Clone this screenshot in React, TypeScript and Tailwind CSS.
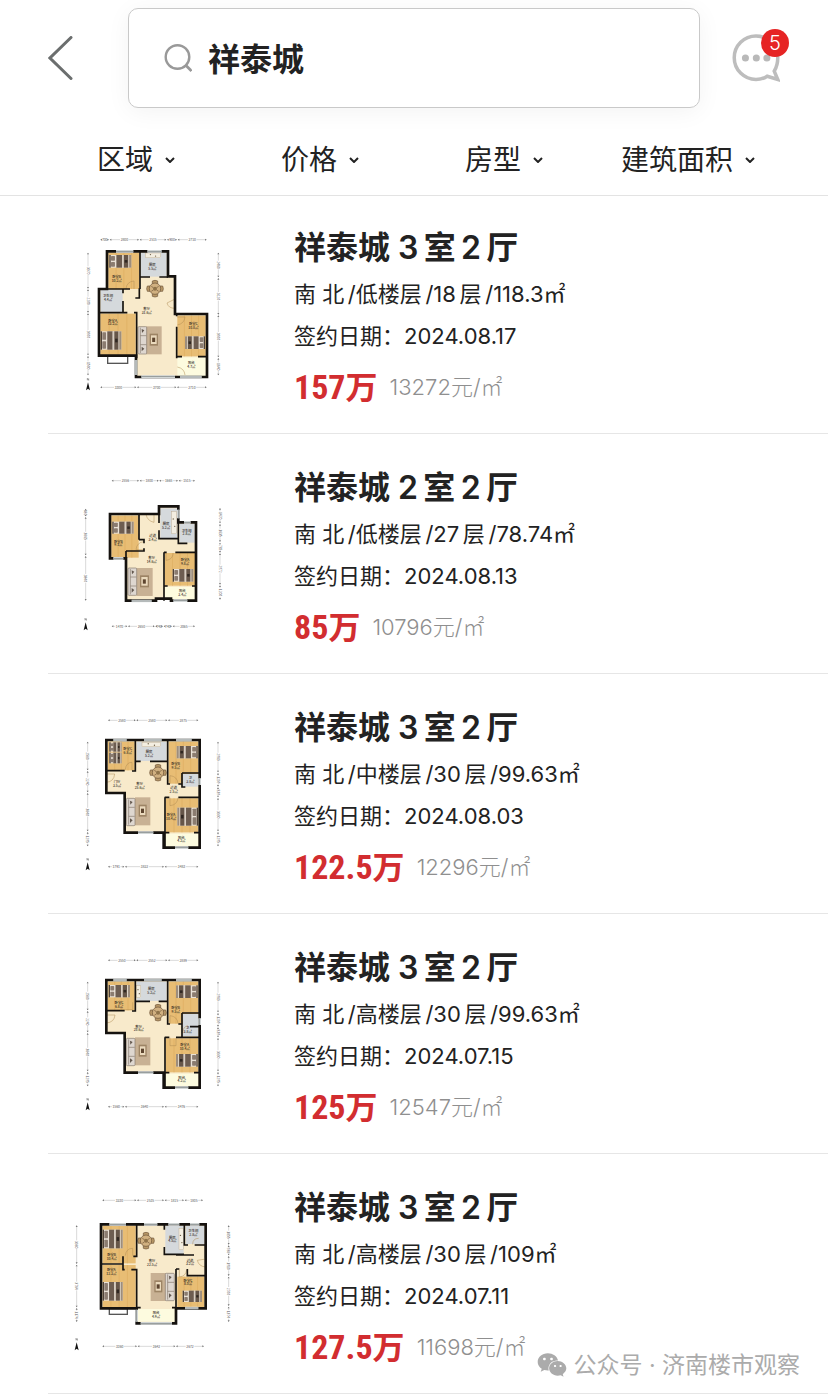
import { useState } from "react";
import { FaWeixin } from "react-icons/fa";

type Box = [x: number, y: number, w: number, h: number];
type Span = { pos: number; stops: number[]; sizes: string[] };

type Plan = {
  shell: string;
  wood: Box[];
  tile: Box[];
  balcony: Box;
  walls: string;
  windows: string;
  doors: string;
  bay?: Box;
  beds: { box: Box; head: "left" | "right" }[];
  sofa: { box: Box; rug: Box };
  dining?: [number, number];
  counter?: Box;
  labels: [x: number, y: number, name: string, area: string][];
  top: Span;
  bottom: Span;
  left: Span;
  right: Span;
};

type Listing = {
  id: number;
  rooms: number;
  level: string;
  floors: number;
  area: string;
  date: string;
  price: string;
  unit: string;
  plan: Plan;
};

// narrow space between digits and Chinese characters
const SP = "\u2006";

const filters = [
  { label: "区域", options: ["历下", "市中", "槐荫"] },
  { label: "价格", options: ["100万以下", "100-150万", "150万以上"] },
  { label: "房型", options: ["2室", "3室", "4室"] },
  { label: "建筑面积", options: ["90㎡以下", "90-120㎡", "120㎡以上"] },
];

const planA: Plan = {
  shell: "M111 79H294V154H315V267H411V456H198V392H87V192H111Z",
  wood: [
    [115, 83, 93, 109],
    [91, 266, 106, 125],
    [322, 272, 85, 122],
  ],
  tile: [
    [213, 83, 77, 72],
    [92, 195, 66, 66],
  ],
  balcony: [322, 397, 85, 56],
  walls:
    "M210 79V192M210 156H240M268 156H294M87 192H180M159 192V205M159 228V262M87 263H172M192 263H200V400M196 219H208V190M320 267V274M320 305V400M320 395H336M384 395H411",
  windows: "M138 79H190M232 79H275M214 455H315M330 456H395M198 405V450",
  doors: "M192 192V168A24 24 0 0 0 168 192M315 222L291 234Q295 250 315 250M322 426Q343 430 345 450M322 276H345Q343 296 322 300",
  bay: [113, 393, 60, 22],
  beds: [
    { box: [118, 90, 66, 38], head: "left" },
    { box: [92, 319, 62, 55], head: "left" },
    { box: [345, 334, 60, 38], head: "right" },
  ],
  sofa: { box: [204, 305, 26, 82], rug: [228, 304, 47, 84] },
  dining: [255, 191],
  counter: [226, 84, 46, 14],
  labels: [
    [140, 160, "卧室B", "10.2㎡"],
    [247, 124, "厨房", "5.5㎡"],
    [114, 216, "卫生间", "4.4㎡"],
    [128, 290, "卧室A", "13.2㎡"],
    [230, 256, "客厅", "31.6㎡"],
    [370, 300, "卧室C", "10.8㎡"],
    [364, 418, "阳台", "4.7㎡"],
  ],
  top: { pos: 44, stops: [90, 118, 208, 290, 322, 411], sizes: ["700", "2800", "2515", "900", "2710"] },
  bottom: { pos: 487, stops: [90, 200, 320, 411], sizes: ["3300", "3700", "2710"] },
  left: { pos: 54, stops: [82, 192, 264, 392, 452], sizes: ["3370", "2200", "3900", "1500"] },
  right: { pos: 445, stops: [82, 158, 270, 398, 452], sizes: ["2460", "3220", "3900", "1640"] },
};

const planB: Plan = {
  shell: "M120 147H267V124H325V172H378V407H303V401H258V407H168V280H120Z",
  wood: [
    [124, 152, 82, 126],
    [285, 264, 90, 98],
  ],
  tile: [
    [271, 130, 50, 90],
    [329, 177, 45, 56],
  ],
  balcony: [285, 366, 90, 38],
  walls:
    "M207 147V224M168 258H222V250M168 258V280M267 147V174M267 196V221H325M325 172V235H352M222 235V224H207M282 262V407M282 262H290M316 262H378M282 363H293M366 363H378",
  windows: "M130 280H160M185 408H245M310 407H352M342 172H362M325 134V160",
  doors: "M252 147V172Q232 168 228 148M222 230Q200 232 198 254H222M288 264V286Q308 284 310 264M206 222V206",
  beds: [
    { box: [127, 170, 64, 36], head: "left" },
    { box: [308, 312, 62, 38], head: "left" },
  ],
  sofa: { box: [174, 309, 26, 82], rug: [199, 309, 49, 84] },
  counter: [305, 140, 14, 66],
  labels: [
    [145, 233, "卧室B", "9.1㎡"],
    [248, 216, "过道", "3.4㎡"],
    [288, 180, "厨房", "5.2㎡"],
    [350, 200, "卫生间", "2.8㎡"],
    [245, 282, "客厅", "14.6㎡"],
    [345, 288, "卧室A", "9.8㎡"],
    [337, 382, "阳台", "3.4㎡"],
  ],
  top: { pos: 47, stops: [124, 208, 267, 325, 376], sizes: ["2556", "1800", "1665", "1515"] },
  bottom: { pos: 484, stops: [124, 173, 255, 280, 307, 376], sizes: ["1470", "2650", "740", "740", "2065"] },
  left: { pos: 47, stops: [130, 155, 272, 408], sizes: ["680", "3865", "3840"] },
  right: { pos: 450, stops: [128, 176, 232, 264, 360, 405], sizes: ["1470", "1635", "785", "2972", "1200"] },
};

const planC: Plan = {
  shell: "M109 105H389V428H281V383H164V264H109Z",
  wood: [
    [114, 110, 80, 86],
    [296, 110, 88, 126],
    [288, 280, 96, 102],
  ],
  tile: [
    [200, 110, 90, 58],
    [338, 207, 46, 38],
  ],
  balcony: [286, 386, 98, 39],
  walls:
    "M196 105V198H186M109 197H164M196 169H212M240 169H293M293 105V237H300M325 237H336M336 204V246H346M336 204H389M284 277H298M325 277H389M285 277V428M285 383H298M372 383H389",
  windows: "M130 105H170M222 105H275M318 105H365M204 383H250M315 428H355M389 220V240",
  doors: "M109 207H134Q132 230 109 232M166 194Q168 172 186 172V196M300 236V212Q322 214 324 236M300 278V302Q322 300 324 278",
  beds: [
    { box: [118, 112, 37, 28], head: "left" },
    { box: [118, 143, 37, 32], head: "left" },
    { box: [320, 123, 63, 37], head: "right" },
    { box: [322, 308, 62, 54], head: "right" },
  ],
  sofa: { box: [169, 280, 26, 82], rug: [195, 277, 46, 84] },
  dining: [264, 203],
  counter: [216, 112, 56, 13],
  labels: [
    [173, 136, "卧室C", "6.8㎡"],
    [237, 144, "厨房", "5.2㎡"],
    [317, 180, "卧室B", "9.5㎡"],
    [141, 235, "门厅", "3.5㎡"],
    [209, 241, "客厅", "25.6㎡"],
    [311, 252, "过道", "2.5㎡"],
    [361, 222, "卫", "3.8㎡"],
    [303, 333, "卧室A", "10.4㎡"],
    [334, 401, "阳台", "4.2㎡"],
  ],
  top: { pos: 46, stops: [113, 198, 293, 386], sizes: ["2580", "2580", "2875"] },
  bottom: { pos: 485, stops: [113, 164, 283, 386], sizes: ["1791", "3822", "3483"] },
  left: { pos: 53, stops: [109, 197, 263, 380, 425], sizes: ["2580", "2240", "3840", "1295"] },
  right: { pos: 444, stops: [109, 203, 246, 278, 380, 425], sizes: ["2983", "1239", "839", "3330", "1295"] },
};

const planD: Plan = {
  ...planC,
  tile: [
    [200, 110, 90, 58],
    [338, 207, 46, 66],
  ],
  walls:
    "M196 105V198H186M109 197H164M196 169H240M266 169H293M293 105V237H300M325 237H336M336 204V277M336 204H389M360 245H389M284 277H298M318 277H389M285 277V428M285 383H298M372 383H389",
  doors: "M109 210H135Q133 232 109 234M166 194H188V172M300 236V212Q322 214 324 236M300 278V302H318V278M338 262Q340 244 354 242",
  beds: [
    { box: [116, 120, 64, 37], head: "left" },
    { box: [318, 121, 65, 38], head: "right" },
    { box: [318, 327, 65, 38], head: "right" },
  ],
  counter: [200, 122, 12, 36],
  labels: [
    [147, 177, "卧室C", "6.8㎡"],
    [244, 136, "厨房", "5.2㎡"],
    [317, 192, "卧室B", "9.5㎡"],
    [206, 248, "客厅", "25.6㎡"],
    [353, 253, "卫", "3.8㎡"],
    [344, 303, "卧室A", "10.4㎡"],
    [335, 401, "阳台", "4.2㎡"],
  ],
  top: { pos: 46, stops: [113, 198, 293, 386], sizes: ["2550", "2552", "2889"] },
  bottom: { pos: 485, stops: [113, 164, 283, 386], sizes: ["1560", "3640", "3476"] },
};

const planE: Plan = {
  shell: "M93 118H407V370H318V415H200V370H93Z",
  wood: [
    [98, 123, 99, 112],
    [98, 240, 99, 126],
    [322, 275, 81, 91],
  ],
  tile: [
    [286, 123, 55, 84],
    [347, 123, 56, 54],
  ],
  balcony: [204, 372, 110, 38],
  walls:
    "M200 118V214H190M93 237H159M159 214V254H164M184 254H200V370M283 118V134M283 186V208H342M343 118V180H354M374 180H407M318 210H372M407 180V218M318 252V370M318 252H328M352 252V272H407M200 368H212M306 368H318",
  windows: "M118 118H168M222 118H262M295 118H328M360 118H388M345 369H385M212 415H306M200 374V410",
  doors: "M166 212Q168 190 188 190V212M407 222L382 226Q386 244 407 246M328 254V276Q348 274 350 254M368 178Q368 160 386 160",
  bay: [118, 371, 54, 17],
  beds: [
    { box: [98, 134, 60, 56], head: "left" },
    { box: [98, 291, 60, 56], head: "left" },
    { box: [338, 317, 58, 34], head: "left" },
  ],
  sofa: { box: [286, 265, 27, 82], rug: [242, 264, 46, 84] },
  dining: [228, 167],
  counter: [327, 130, 13, 64],
  labels: [
    [125, 213, "卧室B", "10.4㎡"],
    [124, 258, "卧室A", "12.3㎡"],
    [246, 231, "客厅", "22.5㎡"],
    [307, 161, "厨房", "4.5㎡"],
    [370, 142, "卫生间", "2.8㎡"],
    [360, 230, "过道", "3.2㎡"],
    [354, 290, "卧室C", "8.5㎡"],
    [258, 388, "阳台", "4.9㎡"],
  ],
  top: { pos: 46, stops: [96, 200, 283, 343, 400], sizes: ["3230", "2535", "1815", "1805"] },
  bottom: { pos: 484, stops: [96, 202, 317, 403], sizes: ["3360", "3642", "2672"] },
  left: { pos: 20, stops: [120, 238, 368, 412], sizes: ["3380", "3764", "1174"] },
  right: { pos: 476, stops: [120, 180, 212, 274, 364, 412], sizes: ["1855", "988", "1910", "2700", "1374"] },
};

const listings: Listing[] = [
  {
    id: 1,
    rooms: 3,
    level: "低",
    floors: 18,
    area: "118.3",
    date: "2024.08.17",
    price: "157",
    unit: "13272",
    plan: planA,
  },
  {
    id: 2,
    rooms: 2,
    level: "低",
    floors: 27,
    area: "78.74",
    date: "2024.08.13",
    price: "85",
    unit: "10796",
    plan: planB,
  },
  {
    id: 3,
    rooms: 3,
    level: "中",
    floors: 30,
    area: "99.63",
    date: "2024.08.03",
    price: "122.5",
    unit: "12296",
    plan: planC,
  },
  {
    id: 4,
    rooms: 3,
    level: "高",
    floors: 30,
    area: "99.63",
    date: "2024.07.15",
    price: "125",
    unit: "12547",
    plan: planD,
  },
  {
    id: 5,
    rooms: 3,
    level: "高",
    floors: 30,
    area: "109",
    date: "2024.07.11",
    price: "127.5",
    unit: "11698",
    plan: planE,
  },
];

function Dimension({ span, vertical }: { span: Span; vertical?: boolean }) {
  // vertical rulers are the horizontal one turned by 90 degrees
  return (
    <g transform={vertical ? `translate(${span.pos} 0) rotate(90)` : `translate(0 ${span.pos})`}>
      {span.sizes.map((size, i) => {
        const a = span.stops[i];
        const b = span.stops[i + 1];
        const mid = (a + b) / 2;
        const gap = Math.min(13, (b - a) / 3);
        return (
          <g key={i}>
            <path
              d={`M${a + 2} 0H${mid - gap}M${mid + gap} 0H${b - 2}`}
              stroke="#b5b5b5"
              strokeWidth="1.5"
            />
            <path
              d={`M${a + 1} 0l5 -3v6zM${b - 1} 0l-5 -3v6z`}
              fill="#777"
            />
            <text x={mid} y="4" fontSize="10" textAnchor="middle" fill="#555">
              {size}
            </text>
          </g>
        );
      })}
    </g>
  );
}

function Bed({ box, head }: { box: Box; head: "left" | "right" }) {
  const [x, y, w, h] = box;
  return (
    <g transform={head === "right" ? `translate(${x + w} ${y}) scale(-1 1)` : `translate(${x} ${y})`}>
      <rect width={w} height={h} fill="#e9e1d6" />
      <rect width="4" height={h} fill="#4f4238" />
      <rect x="5" y="3" width={w * 0.18} height={h / 2 - 5} rx="2" fill="#8b7c70" />
      <rect x="5" y={h / 2 + 2} width={w * 0.18} height={h / 2 - 5} rx="2" fill="#8b7c70" />
      <rect x={w * 0.32} width={w * 0.26} height={h} fill="#6d5d51" />
      <rect x={w * 0.58} width={w * 0.08} height={h} fill="#d8cec2" />
      <rect x={w * 0.66} width={w * 0.2} height={h} fill="#665649" />
      <rect x={w * 0.7} y={h * 0.4} width={w * 0.12} height={h * 0.2} fill="#2f2722" />
      <rect x={w * 0.9} width={w * 0.1} height={h} fill="#9d8d7c" />
    </g>
  );
}

function Dining({ x, y }: { x: number; y: number }) {
  return (
    <g transform={`translate(${x} ${y})`} stroke="#6e5539" strokeWidth="2">
      {[0, 90, 180, 270].map((a) => (
        <path
          key={a}
          d="M-8 -15V-23Q0 -27 8 -23V-15Z"
          fill="#b79766"
          transform={`rotate(${a})`}
        />
      ))}
      <circle r="17" fill="#d0b080" />
      <circle r="6" fill="#8f7349" stroke="none" />
      <path d="M-11 -7l6 4M11 -7l-6 4M-11 8l6 -4M11 8l-6 -4" />
    </g>
  );
}

function FloorPlan({ plan }: { plan: Plan }) {
  const { sofa, bay, counter } = plan;
  const [sx, sy, sw, sh] = sofa.box;
  const [rx, ry, rw, rh] = sofa.rug;
  return (
    <svg
      viewBox="0 9 510 549"
      className="h-[183px] w-[170px] shrink-0 font-['Noto_Sans_CJK_SC',sans-serif]"
      role="img"
      aria-label="户型图"
    >
      <Dimension span={plan.top} />
      <Dimension span={plan.bottom} />
      <Dimension span={plan.left} vertical />
      <Dimension span={plan.right} vertical />

      <path d={plan.shell} fill="#f8eacb" />
      {plan.wood.map(([x, y, w, h], i) => (
        <g key={i}>
          <rect x={x} y={y} width={w} height={h} fill="#e8bd74" />
          <path
            d={`M${x + w * 0.25} ${y}v${h}M${x + w * 0.5} ${y}v${h}M${x + w * 0.75} ${y}v${h}`}
            stroke="#deae60"
            strokeWidth="2"
          />
        </g>
      ))}
      {plan.tile.map(([x, y, w, h], i) => (
        <rect key={i} x={x} y={y} width={w} height={h} fill="#d5d9dc" />
      ))}
      <rect
        x={plan.balcony[0]}
        y={plan.balcony[1]}
        width={plan.balcony[2]}
        height={plan.balcony[3]}
        fill="#fdfbdf"
      />

      {/* furniture */}
      {plan.beds.map((b, i) => (
        <Bed key={i} {...b} />
      ))}
      <rect x={rx} y={ry} width={rw} height={rh} fill="#c8b194" />
      <rect x={rx + 11} y={ry + 22} width={rw - 22} height="36" fill="#9d8465" />
      <rect x={rx + 15} y={ry + 27} width={rw - 30} height="26" fill="#ead9bc" />
      <path d={`M${rx + rw / 2 - 5} ${ry + 34}h9v13h-9z`} fill="#5d452f" />
      <rect x={sx} y={sy} width={sw} height={sh} rx="3" fill="#ded7d0" stroke="#85786d" strokeWidth="2" />
      <path
        d={`M${sx + 7} ${sy + 3}V${sy + sh - 3}M${sx + 7} ${sy + 27}h${sw - 8}M${sx + 7} ${sy + 54}h${sw - 8}`}
        stroke="#85786d"
        strokeWidth="2"
      />
      <path
        d={`M${sx + 11} ${sy + 7}l8 4l-7 8zM${sx + 11} ${sy + 60}l8 6l-8 8z`}
        fill="#62574e"
      />
      {plan.dining && <Dining x={plan.dining[0]} y={plan.dining[1]} />}
      {counter && (
        <g>
          <rect x={counter[0]} y={counter[1]} width={counter[2]} height={counter[3]} fill="#f3eee1" stroke="#b79e78" />
          <circle cx={counter[0] + counter[2] / 3} cy={counter[1] + counter[3] / 3} r="2" fill="#6d5d45" />
          <circle cx={counter[0] + (counter[2] * 2) / 3} cy={counter[1] + (counter[3] * 2) / 3} r="2" fill="#6d5d45" />
        </g>
      )}

      {/* walls, openings */}
      <path d={plan.doors} fill="none" stroke="#b08d55" strokeWidth="1.5" />
      {bay && (
        <rect x={bay[0]} y={bay[1]} width={bay[2]} height={bay[3]} fill="#fff" stroke="#555" strokeWidth="4" />
      )}
      <path d={plan.walls} fill="none" stroke="#15120f" strokeWidth="5" />
      <path d={plan.shell} fill="none" stroke="#15120f" strokeWidth="8" />
      <path d={plan.windows} stroke="#dfe3e3" strokeWidth="8" />
      <path d={plan.windows} stroke="#8b9191" strokeWidth="3" />

      {plan.labels.map(([x, y, name, area], i) => (
        <text key={i} textAnchor="middle" fontSize="10" fontWeight="500" fill="#2c2620">
          <tspan x={x} y={y}>
            {name}
          </tspan>
          <tspan x={x} y={y + 11}>
            {area}
          </tspan>
        </text>
      ))}

      {/* compass */}
      <g transform={`translate(${plan.left.pos} 486)`}>
        <path d="M0 -14L6 10L0 5L-6 10Z" fill="#111" />
        <path d="M-2 -20V-26L2 -20V-26" fill="none" stroke="#555" strokeWidth="1.5" />
      </g>
    </svg>
  );
}

function ListingRow({ item }: { item: Listing }) {
  return (
    <li className="ml-12 flex gap-[54px] border-b border-[#e6e6e6] pt-[34px] pb-[22px] pl-[22px]">
      <FloorPlan plan={item.plan} />
      <div className="min-w-0 whitespace-nowrap text-[#222]">
        <h2 className="text-[32px] leading-10 font-semibold">
          {`祥泰城 ${item.rooms}${SP}室${SP}2${SP}厅`}
        </h2>
        <p className="mt-[5px] text-[22px] leading-[42px]">
          {`南 北${SP}/${item.level}楼层${SP}/${item.floors}${SP}层${SP}/${item.area}㎡`}
        </p>
        <p className="text-[22px] leading-[42px]">签约日期：{item.date}</p>
        <p className="mt-1.5 flex h-12 items-center gap-3 leading-[48px]">
          <span className="font-['Roboto_Condensed','Liberation_Sans_Narrow','Roboto','Noto_Sans_CJK_SC',sans-serif] text-[34px] font-bold text-[#d22d30]">
            {item.price}
            <span className="text-[32px]">万</span>
          </span>
          <span className="text-[22px] font-light text-[#8f8f8f]">
            {item.unit}元/㎡
          </span>
        </p>
      </div>
    </li>
  );
}

export default function App() {
  const [keyword, setKeyword] = useState("祥泰城");

  return (
    <main
      lang="zh-CN"
      className="relative min-h-screen w-full overflow-x-hidden bg-white font-['Inter','Noto_Sans_CJK_SC',sans-serif] text-[#222]"
    >
      {/* Search */}
      <header className="flex items-center pt-2 pb-4">
        <button type="button" aria-label="返回" className="w-32 shrink-0 pl-12">
          <svg viewBox="0 0 25 44" className="h-11 w-[25px]" fill="none" stroke="#6b6e6e" strokeWidth="3">
            <path d="M23 1.5L2 22L23 42.5" strokeLinecap="round" />
          </svg>
        </button>
        <label className="flex h-[100px] min-w-0 flex-1 items-center gap-4 rounded-[10px] border border-[#c9c9c9] px-[35px] shadow-[0_4px_24px_rgba(0,0,0,0.05)]">
          <svg viewBox="0 0 28 28" className="size-7 shrink-0" fill="none" stroke="#999" strokeWidth="2.4">
            <circle cx="13.5" cy="13" r="11.8" />
            <path d="M21.5 21L27.5 27" strokeWidth="2.8" />
          </svg>
          <input
            aria-label="搜索小区"
            className="w-full min-w-0 bg-transparent pt-1 text-[32px] leading-10 font-semibold outline-none"
            value={keyword}
            onChange={(e) => setKeyword(e.target.value)}
          />
        </label>
        <button type="button" aria-label="消息" className="relative mr-12 ml-8 size-12 shrink-0">
          <svg viewBox="0 0 150 150" className="size-12" fill="none" stroke="#bdbdbd" strokeWidth="11">
            <path d="M75 142Q95 142 110 132L143 142L132 116Q143 98 143 74A68 68 0 0 0 7 74A68 68 0 0 0 75 142Z" />
            <g fill="#b9b9b9" stroke="none">
              <circle cx="42" cy="75" r="11" />
              <circle cx="76" cy="75" r="11" />
              <circle cx="109" cy="75" r="11" />
            </g>
          </svg>
          <span className="absolute -top-[5px] -right-[9px] size-7 rounded-full bg-[#e62424] text-center text-xl leading-7 font-light text-white">
            5
          </span>
        </button>
      </header>

      {/* Filters */}
      <nav className="grid h-[72px] grid-cols-[repeat(4,1fr)] items-center border-b border-[#e3e3e3] pr-12 pl-11">
        {filters.map((f) => (
          <label key={f.label} className="flex items-center justify-center gap-3">
            <select
              aria-label={f.label}
              className="field-sizing-content appearance-none bg-transparent text-[28px] leading-10 outline-none"
            >
              <option>{f.label}</option>
              {f.options.map((o) => (
                <option key={o}>{o}</option>
              ))}
            </select>
            <svg viewBox="0 0 10 6" className="w-2.5" fill="none" stroke="#222" strokeWidth="2">
              <path d="M1 1L5 5L9 1" />
            </svg>
          </label>
        ))}
      </nav>

      {/* Deals */}
      <ul className="-mt-0.5">
        {listings.map((item) => (
          <ListingRow key={item.id} item={item} />
        ))}
      </ul>

      {/* Watermark */}
      <div className="absolute right-7 bottom-4 flex items-center gap-1.5 text-[23px] leading-[34px] whitespace-nowrap text-[#ababab]">
        <FaWeixin className="size-[30px]" />
        <span>公众号 · 济南楼市观察</span>
      </div>
    </main>
  );
}
